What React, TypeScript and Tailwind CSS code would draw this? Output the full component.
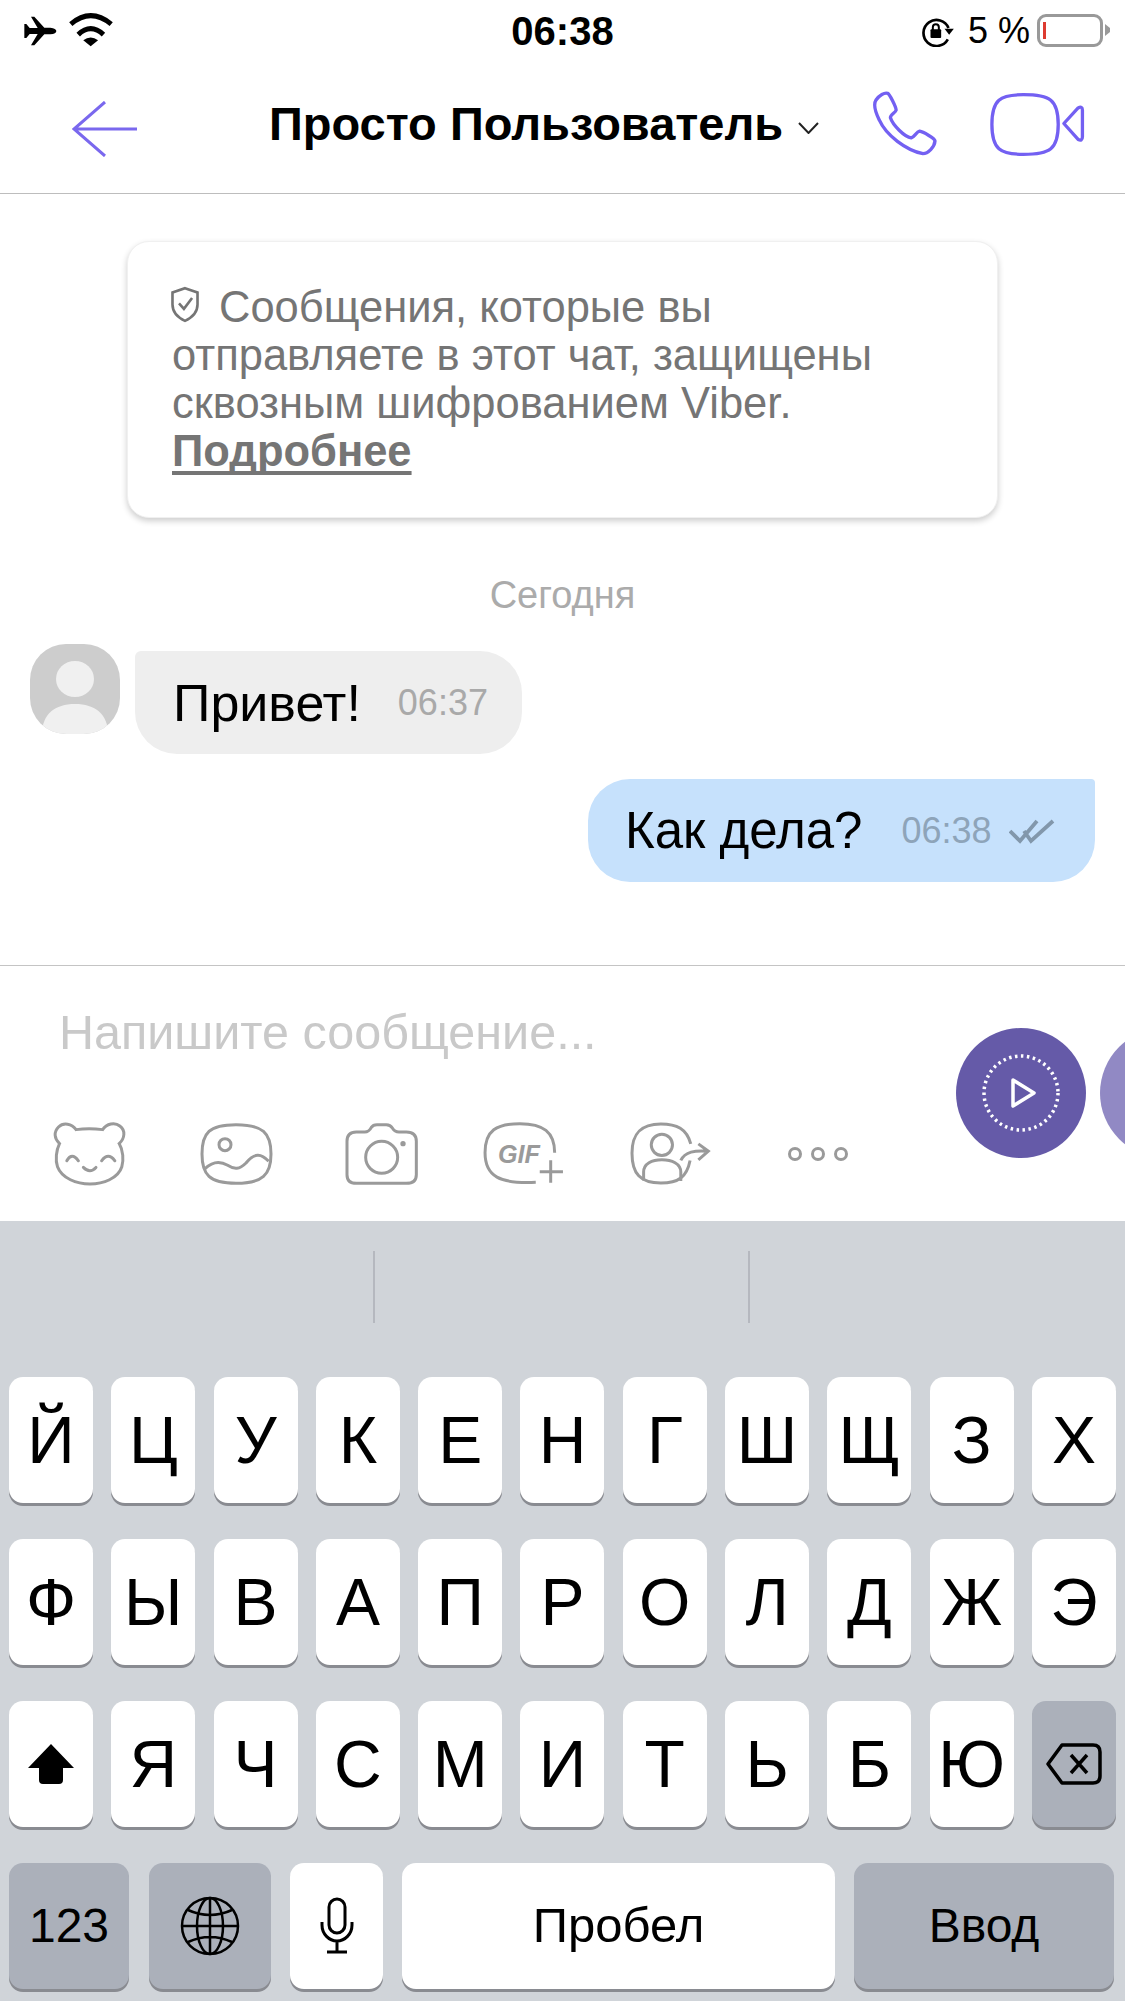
import { ReactNode } from "react";
import { twMerge } from "tailwind-merge";

const rows = [
  ["Й", "Ц", "У", "К", "Е", "Н", "Г", "Ш", "Щ", "З", "Х"],
  ["Ф", "Ы", "В", "А", "П", "Р", "О", "Л", "Д", "Ж", "Э"],
];
const row3 = ["Я", "Ч", "С", "М", "И", "Т", "Ь", "Б", "Ю"];

function Key({ children, className = "" }: { children?: ReactNode; className?: string }) {
  return (
    <div
      className={twMerge(
        "h-[126px] w-[84px] shrink-0 rounded-[14px] bg-white shadow-[0_3px_0_#898b91] flex items-center justify-center text-[66px] text-black",
        className,
      )}
    >
      {children}
    </div>
  );
}

function StatusBar() {
  return (
    <div className="h-[64px] flex items-center relative shrink-0">
      <svg className="absolute left-[24px] top-[16px] w-[33px] h-[30px]" viewBox="72 48 97 90">
        <path d="M72 72 L78 72 L88 84 L112 84 L92 50 L102 50 L132 83 L150 83 C162 84 168 88 168 93 C168 98 162 103 150 103 L132 103 L102 136 L92 136 L112 102 L88 102 L78 114 L72 114 Z" fill="#000" />
      </svg>
      <svg className="absolute left-[68px] top-[12px] w-[46px] h-[35px]" viewBox="205 36 136 104">
        <path d="M213 72 Q272 22 333 72" fill="none" stroke="#000" strokeWidth="15" />
        <path d="M235 103 Q272 68 310 103" fill="none" stroke="#000" strokeWidth="15" />
        <path d="M250 120 Q272 103 294 120 L272 138 Z" fill="#000" />
      </svg>
      <div className="w-full text-center text-[40px] font-bold text-black leading-none -mt-[3px]">06:38</div>
      <svg className="absolute left-[919px] top-[15px] w-[36px] h-[32px]" viewBox="55 45 105 96">
        <path d="M140 118 A39 39 0 1 1 142 84" fill="none" stroke="#000" strokeWidth="8" />
        <path d="M130 86 L158 86 L144 104 Z" fill="#000" />
        <rect x="88" y="88" width="32" height="26" rx="3" fill="#000" />
        <path d="M95 90 V82 A9 9 0 0 1 113 82 V90" fill="none" stroke="#000" strokeWidth="6" />
      </svg>
      <div className="absolute left-[968px] top-[13px] text-[36px] leading-[36px] text-black whitespace-pre">5 %</div>
      <div className="absolute left-[1037px] top-[14px] w-[66px] h-[33px] rounded-[9px] border-[3px] border-[#999999] bg-white">
        <div className="ml-[3px] mt-[5px] w-[3px] h-[17px] bg-[#dd3b30]" />
      </div>
      <svg className="absolute left-[1105px] top-[24px] w-[5px] h-[12px]" viewBox="0 0 5 12">
        <path d="M0 0 L5 4 V8 L0 12 Z" fill="#999999" />
      </svg>
    </div>
  );
}

function Header() {
  return (
    <div className="h-[130px] shrink-0 border-b border-[#bdbdbd] flex items-center pl-[72px] text-[#7360f2]">
      <svg className="w-[65px] h-[56px]" viewBox="0 0 65 56" fill="none" stroke="#7a68ee" strokeWidth="3">
        <path d="M33 1 L2 28 L33 55 M2 28 H65" />
      </svg>
      <div className="ml-[132px] -mt-[10px] w-[513px] text-[47px] font-bold text-black leading-none whitespace-nowrap">Просто Пользователь</div>
      <svg className="ml-[16px] -mt-[2px] w-[21px] h-[12px]" viewBox="0 0 21 12" fill="none" stroke="#222" strokeWidth="2">
        <path d="M1 1 L10.5 11 L20 1" />
      </svg>
      <svg className="ml-[52px] -mt-[12px] w-[66px] h-[66px]" viewBox="35 35 197 197" fill="none" stroke="#7360f2" strokeWidth="10" strokeLinejoin="round">
        <path d="M50 65 C60 50 75 42 85 45 C90 47 110 85 110 95 C108 103 92 108 93 118 C100 140 135 175 155 178 C165 175 170 160 180 158 C190 160 225 178 226 187 C225 205 205 225 190 225 C140 215 80 170 60 125 C50 105 40 80 50 65 Z" />
      </svg>
      <svg className="ml-[52px] -mt-[8px] w-[96px] h-[63px]" viewBox="390 40 282 190" fill="none" stroke="#7360f2" strokeWidth="10" strokeLinejoin="round">
        <path d="M490 45 C570 45 595 60 595 135 C595 210 570 225 490 225 C420 225 395 210 395 135 C395 60 420 45 490 45 Z" />
        <path d="M612 132 L655 85 Q668 78 668 92 V172 Q668 186 655 180 Z" />
      </svg>
    </div>
  );
}

function Chat() {
  return (
    <div className="flex-1 min-h-0 flex flex-col border-b border-[#c4c4c4]">
      <div className="ml-[127px] mt-[47px] w-[871px] h-[277px] rounded-[22px] bg-white border border-[#f0f0f0] shadow-[0_3px_6px_rgba(0,0,0,0.2)] pl-[44px] pt-[41px] text-[43.5px] leading-[48px] text-[#757575]">
        <div className="flex items-center">
          <svg className="-ml-[2px] w-[30px] h-[37px] -mt-[5px] mr-[19px]" viewBox="0 0 27 34" fill="none" stroke="#757575" strokeWidth="2.4">
            <path d="M13.5 2 L25 6 V17 C25 24 20 29 13.5 32 C7 29 2 24 2 17 V6 Z" />
            <path d="M8 16 L12.5 21 L20 11" />
          </svg>
          Сообщения, которые вы
        </div>
        <div>отправляете в этот чат, защищены</div>
        <div>сквозным шифрованием Viber.</div>
        <div className="font-bold underline decoration-[4px] underline-offset-[5px] [text-decoration-skip-ink:none]">Подробнее</div>
      </div>
      <div className="mt-[57px] text-center text-[38px] leading-[40px] text-[#ababab]">Сегодня</div>
      <div className="mt-[29px] ml-[30px] flex items-start">
        <svg className="w-[90px] h-[90px] shrink-0" viewBox="0 0 90 90">
          <clipPath id="avatar-clip">
            <rect width="90" height="90" rx="36" />
          </clipPath>
          <g clipPath="url(#avatar-clip)">
            <rect width="90" height="90" fill="#cdcdcd" />
            <ellipse cx="45" cy="35" rx="19" ry="18" fill="#f0f0f0" />
            <path d="M12 90 C12 70 25 60 45 60 C65 60 78 70 78 90 Z" fill="#f0f0f0" />
          </g>
        </svg>
        <div className="ml-[15px] mt-[7px] h-[103px] w-[387px] rounded-[42px] rounded-tl-[6px] bg-[#eeeeee] flex items-center pl-[38px]">
          <span className="text-[52px] text-black leading-none">Привет!</span>
          <span className="ml-[37px] text-[36px] text-[#a9a9a9] leading-none">06:37</span>
        </div>
      </div>
      <div className="mt-[25px] ml-[588px] h-[103px] w-[507px] rounded-[42px] rounded-tr-[4px] bg-[#c6e1fc] flex items-center pl-[37px]">
        <span className="text-[51px] text-black leading-none">Как дела?</span>
        <span className="ml-[39px] text-[36px] text-[#8ea4b9] leading-none">06:38</span>
        <svg className="ml-[17px] w-[46px] h-[26px]" viewBox="0 0 46 24" fill="none" stroke="#8297ab" strokeWidth="3.8">
          <path d="M1 12 L11 22 L28 2 M15 12 L22 22 L44 2" />
        </svg>
      </div>
    </div>
  );
}

function Composer() {
  return (
    <div className="h-[255px] shrink-0 flex overflow-hidden">
      <div className="w-[956px] shrink-0 pl-[54px]">
        <div className="ml-[5px] mt-[44px] text-[48.5px] leading-[44px] text-[#c9c9c9]">Напишите сообщение...</div>
        <div className="mt-[69px] flex items-center text-[#9a9a9a]">
          <svg className="w-[71px] h-[61px] overflow-visible" viewBox="42 38 213 184" fill="none" stroke="#9a9a9a" strokeWidth="9" strokeLinecap="round">
            <path d="M108 58 C95 40 70 35 55 50 C40 65 42 85 58 100 C48 120 45 150 52 170 C65 205 110 222 150 222 C190 222 235 205 246 170 C252 150 250 120 238 100 C255 85 258 60 240 47 C225 35 200 40 188 58 C165 55 130 55 108 58 Z" />
            <path d="M80 152 Q95 125 115 152 M185 152 Q205 125 225 152 M130 172 Q150 192 168 172" />
          </svg>
          <svg className="ml-[77px] w-[69px] h-[60px] overflow-visible" viewBox="488 38 207 180" fill="none" stroke="#9a9a9a" strokeWidth="9">
            <path d="M590 40 C670 40 695 65 695 128 C695 190 670 216 590 216 C510 216 488 190 488 128 C488 65 510 40 590 40 Z" />
            <circle cx="557" cy="100" r="18" />
            <path d="M497 172 C520 150 545 150 565 162 C585 175 600 175 620 155 C645 125 665 125 688 150" />
          </svg>
          <svg className="ml-[76px] w-[70px] h-[60px] overflow-visible" viewBox="922 38 210 180" fill="none" stroke="#9a9a9a" strokeWidth="9">
            <path d="M922 90 Q922 62 950 62 H975 Q988 62 995 48 Q1000 40 1012 40 H1040 Q1052 40 1058 50 Q1065 62 1078 62 H1100 Q1130 62 1130 90 V190 Q1130 216 1100 216 H950 Q922 216 922 190 Z" />
            <circle cx="1026" cy="138" r="48" />
            <circle cx="1090" cy="97" r="8" fill="#9a9a9a" stroke="none" />
          </svg>
          <svg className="ml-[68px] w-[78px] h-[61px] overflow-visible" viewBox="45 38 235 184" fill="none" stroke="#9a9a9a" strokeWidth="9">
            <path d="M198 217 C90 222 45 200 45 128 C45 60 80 40 150 40 C220 40 255 65 255 128 M243 150 V218 M210 185 H280" />
            <text x="84" y="158" fontFamily="Liberation Sans, sans-serif" fontStyle="italic" fontWeight="700" fontSize="76" fill="#9a9a9a" stroke="none">GIF</text>
          </svg>
          <svg className="ml-[69px] w-[77px] h-[61px] overflow-visible" viewBox="485 38 232 182" fill="none" stroke="#9a9a9a" strokeWidth="9">
            <path d="M662 100 C650 55 620 40 572 40 C510 40 485 70 485 128 C485 190 510 218 572 218 C625 218 650 200 660 150" />
            <circle cx="575" cy="103" r="32" />
            <path d="M520 210 V185 C520 160 545 148 575 148 C605 148 632 160 632 185 V212 M632 150 C645 122 675 120 712 122 M685 100 L715 122 L685 148" />
          </svg>
          <svg className="ml-[79px] w-[60px] h-[14px]" viewBox="0 0 60 14" fill="none" stroke="#9a9a9a" strokeWidth="3">
            <circle cx="7" cy="7" r="5.5" />
            <circle cx="30" cy="7" r="5.5" />
            <circle cx="53" cy="7" r="5.5" />
          </svg>
        </div>
      </div>
      <svg className="mt-[62px] w-[130px] h-[130px] shrink-0" viewBox="0 0 130 130" fill="none">
        <circle cx="65" cy="65" r="65" fill="#655aa8" />
        <circle cx="65" cy="65" r="37" stroke="#fff" strokeWidth="3.5" strokeDasharray="2.5 3.5" />
        <path d="M57 52 L78 65 L57 78 Z" stroke="#fff" strokeWidth="3.5" strokeLinejoin="round" />
      </svg>
      <div className="ml-[14px] mt-[62px] w-[130px] h-[130px] shrink-0 rounded-full bg-[#9189c4]" />
    </div>
  );
}

function Keyboard() {
  return (
    <div className="h-[780px] shrink-0 bg-[#d0d4d9] flex flex-col">
      <div className="h-[156px] flex items-start pt-[30px]">
        <div className="ml-[373px] w-[2px] h-[72px] bg-[#b5b8bf]" />
        <div className="ml-[373px] w-[2px] h-[72px] bg-[#b5b8bf]" />
      </div>
      <div className="flex flex-col gap-[36px] px-[9px]">
        {rows.map((row, i) => (
          <div key={i} className="flex justify-between">
            {row.map((k) => (
              <Key key={k}>{k}</Key>
            ))}
          </div>
        ))}
        <div className="flex justify-between">
          <Key>
            <svg className="w-[46px] h-[40px]" viewBox="0 0 46 40">
              <path d="M23 0 L46 24 H35 V36 Q35 40 31 40 H15 Q11 40 11 36 V24 H0 Z" fill="#000" />
            </svg>
          </Key>
          {row3.map((k) => (
            <Key key={k}>{k}</Key>
          ))}
          <Key className="bg-[#abb0ba]">
            <svg className="w-[56px] h-[42px]" viewBox="0 0 56 42" fill="none" stroke="#000" strokeWidth="3.5" strokeLinejoin="round">
              <path d="M16 2 H47 Q54 2 54 9 V33 Q54 40 47 40 H16 L2 21 Z" />
              <path d="M25 12 L41 30 M41 12 L25 30" />
            </svg>
          </Key>
        </div>
      </div>
      <div className="mt-[36px] pl-[9px] flex">
        <Key className="w-[120px] text-[48px] bg-[#abb0ba]">123</Key>
        <Key className="ml-[20px] w-[122px] bg-[#abb0ba]">
          <svg className="w-[60px] h-[60px]" viewBox="0 0 60 60" fill="none" stroke="#000" strokeWidth="2.5">
            <circle cx="30" cy="30" r="28" />
            <ellipse cx="30" cy="30" rx="13" ry="28" />
            <path d="M30 2 V58 M2 30 H58 M8 14 Q30 24 52 14 M8 46 Q30 36 52 46" />
          </svg>
        </Key>
        <Key className="ml-[19px] w-[93px]">
          <svg className="w-[34px] h-[58px]" viewBox="0 0 34 58" fill="none" stroke="#000" strokeWidth="3">
            <rect x="9" y="2" width="16" height="34" rx="8" />
            <path d="M2 25 V28 C2 37 9 44 17 44 C25 44 32 37 32 28 V25 M17 44 V54 M7 55 H27" />
          </svg>
        </Key>
        <Key className="ml-[19px] w-[433px] text-[49px]">Пробел</Key>
        <Key className="ml-[19px] w-[260px] text-[48px] bg-[#abb0ba]">Ввод</Key>
      </div>
    </div>
  );
}

export default function App() {
  return (
    <div className="w-[1125px] h-[2001px] bg-white overflow-hidden flex flex-col font-['Liberation_Sans',sans-serif]">
      <StatusBar />
      <Header />
      <Chat />
      <Composer />
      <Keyboard />
    </div>
  );
}
